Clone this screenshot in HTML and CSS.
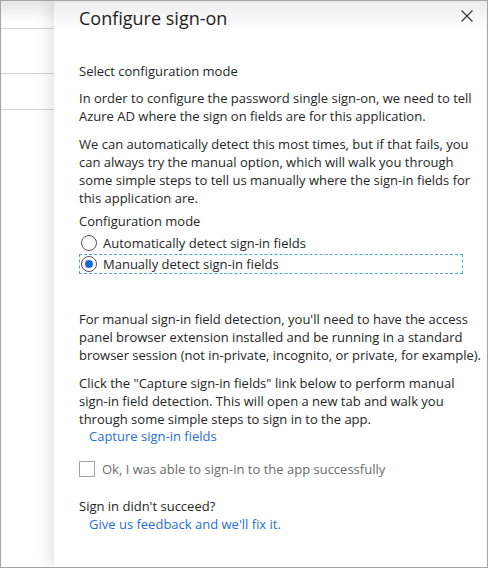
FILE: index.html
```html
<!DOCTYPE html>
<html>
<head>
<meta charset="utf-8">
<link rel="stylesheet" href="styles.css">
</head>
<body>
<div class="frame">
  <div class="blade">
    <div class="blade-head"></div>
    <div class="blade-row r1"></div>
    <div class="blade-row r2"></div>
  </div>
  <div class="panel">
    <div class="panel-head">
      <h1 class="title">Configure sign-on</h1>
      <button class="close" aria-label="Close">
        <svg width="12" height="12" viewBox="0 0 12 12"><path d="M0.5 0.5 L11.5 11.5 M11.5 0.5 L0.5 11.5" stroke="#333" stroke-width="1.1" fill="none"/></svg>
      </button>
    </div>
    <div class="content">
      <div class="section-label">Select configuration mode</div>
      <p class="p p1">In order to configure the password single sign-on, we need to tell Azure AD where the sign on fields are for this application.</p>
      <p class="p p2">We can automatically detect this most times, but if that fails, you can always try the manual option, which will walk you through some simple steps to tell us manually where the sign-in fields for this application are.</p>
      <div class="field-label">Configuration mode</div>
      <div class="radio-group">
        <label class="radio"><span class="radio-circle"></span><span>Automatically detect sign-in fields</span></label>
        <label class="radio focused"><span class="radio-circle checked"></span><span>Manually detect sign-in fields</span></label>
      </div>
      <p class="p p3">For manual sign-in field detection, you'll need to have the access panel browser extension installed and be running in a standard browser session (not in-private, incognito, or private, for example).</p>
      <p class="p p4">Click the "Capture sign-in fields" link below to perform manual sign-in field detection. This will open a new tab and walk you through some simple steps to sign in to the app.</p>
      <a class="link capture">Capture sign-in fields</a>
      <label class="check"><span class="check-box"></span><span>Ok, I was able to sign-in to the app successfully</span></label>
      <div class="fail">Sign in didn't succeed?</div>
      <a class="link feedback">Give us feedback and we'll fix it.</a>
    </div>
  </div>
</div>
</body>
</html>
```
FILE: styles.css
```css
* { box-sizing: border-box; }
html, body { margin: 0; padding: 0; background: #fff; }
body {
  font-family: "Open Sans", "Noto Sans", sans-serif;
  color: #262626;
}
.frame {
  width: 488px;
  height: 568px;
  border: 1px solid #a4a4a4;
  display: flex;
  overflow: hidden;
}
.blade {
  width: 53px;
  flex: none;
  background: #fff;
}
.blade-head {
  height: 28px;
  border-bottom: 1px solid #d4d4d4;
  background: linear-gradient(#e6e6e6, #fff 80%);
}
.blade-row { border-bottom: 1px solid #d4d4d4; }
.r1 { height: 45px; }
.r2 { height: 36px; }
.panel {
  flex: 1;
  position: relative;
  z-index: 1;
  background: #fff;
  box-shadow: -6px 0 12px rgba(0, 0, 0, 0.09);
}
.panel-head {
  height: 40px;
  display: flex;
  align-items: flex-start;
  justify-content: space-between;
  padding-left: 25px;
  background: linear-gradient(#ececec, #fff 70%);
}
.title {
  margin: 0;
  font-size: 18px;
  font-weight: 400;
  line-height: 34px;
  color: #1e1e1e;
}
.close {
  border: 0;
  background: none;
  padding: 0;
  margin: 9px 14px 0 0;
  width: 12px;
  height: 12px;
  display: flex;
}
.content {
  padding: 0 6px 0 25px;
  font-size: 13px;
  line-height: 18px;
}
.section-label { margin-top: 21px; }
.p { margin: 0; }
.p1 { margin-top: 9px; }
.p2 { margin-top: 10px; }
.field-label { margin-top: 5px; }
.radio-group {
  display: flex;
  flex-direction: column;
  gap: 1px;
  margin-top: 3px;
}
.radio {
  display: flex;
  align-items: center;
  gap: 6px;
  height: 20px;
  padding-left: 1px;
  border: 1px dashed transparent;
  margin-right: 18px;
}
.radio.focused { border-color: #4ba6e2; }
.radio-circle {
  width: 16px;
  height: 16px;
  border: 1px solid #555;
  border-radius: 50%;
  display: flex;
  align-items: center;
  justify-content: center;
  flex: none;
}
.radio-circle.checked::after {
  content: "";
  width: 8px;
  height: 8px;
  border-radius: 50%;
  background: #1f66de;
}
.p3 { margin-top: 36px; }
.p4 { margin-top: 10px; }
.link {
  display: block;
  color: #2a6dd8;
  padding-left: 10px;
  cursor: pointer;
}
.capture { margin-top: -1px; }
.check {
  display: flex;
  align-items: center;
  gap: 7px;
  margin-top: 15px;
  color: #6b6b6b;
  height: 18px;
}
.check-box {
  width: 16px;
  height: 16px;
  border: 1px solid #a0a0a0;
  flex: none;
}
.fail { margin-top: 19px; }
```
